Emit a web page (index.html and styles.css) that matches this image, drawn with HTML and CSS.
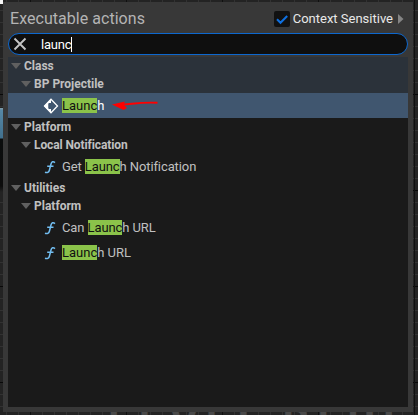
FILE: index.html
```html
<!DOCTYPE html>
<html lang="en">
<head>
<meta charset="utf-8">
<title>Executable actions</title>
<link rel="stylesheet" href="styles.css">
</head>
<body>
<svg width="0" height="0" class="defs">
  <symbol id="fn" viewBox="0 0 12 14"><path d="M11 2.6C9.200 1 7.6 1.600 7 4L5.400 10.2C4.800 12.400 3.200 13.1 1 12.2M3.2 6.200H9.500" fill="none" stroke="#72bdf0" stroke-width="1.5"/></symbol>
</svg>
<div class="node"></div>
<div class="corner"></div>
<div class="watermark">LEVEL BLUE</div>
<main class="panel">
  <header class="head">
    <span class="title">Executable actions</span>
    <span class="check"><svg width="16" height="16" viewBox="0 0 16 16"><path d="M3 8.2L6.5 11.7L13.2 5" fill="none" stroke="#0f70e0" stroke-width="2.1"/></svg></span>
    <span class="context">Context Sensitive</span>
    <svg class="more" width="6" height="10" viewBox="0 0 6 10"><path d="M0 0L5.5 5L0 10Z" fill="#858585"/></svg>
  </header>
  <div class="search">
    <svg width="14" height="14" viewBox="0 0 14 14"><path d="M1.5 1.5L12.5 12.5M12.5 1.5L1.5 12.5" stroke="#c4c4c4" stroke-width="1.9"/></svg>
    <span class="query">launc</span><i class="caret"></i>
  </div>
  <div class="list">
    <div class="row group lit"><i class="tri"></i><span>Class</span></div>
    <div class="row group sub lit"><i class="tri"></i><span>BP Projectile</span></div>
    <div class="row item selected">
      <svg class="event" width="16" height="16" viewBox="0 0 16 16"><path d="M8 1.200L14.500 8L8 14.800L1.500 8Z" fill="none" stroke="#fff" stroke-width="1.3"/><path d="M8 1L1 8L8 15V11H5.5V5H8Z" fill="#fff"/><path d="M5.5 6H8V3.200L12.400 8L8 12.800V10H5.500Z" fill="#40566f"/></svg>
      <span><mark>Launc</mark>h</span>
      <svg class="arrow" width="48" height="14" viewBox="0 0 48 14"><path d="M12 5.500C22 5 29 3 46.500 3.800" stroke="#f00" stroke-width="1.9" fill="none"/><path d="M1 5.500L14 2.500L12.500 5.500L16 9L12.500 11Z" fill="#f00"/></svg>
    </div>
    <div class="row group"><i class="tri"></i><span>Platform</span></div>
    <div class="row group sub"><i class="tri"></i><span class="tight">Local Notification</span></div>
    <div class="row item"><svg class="fn" width="12" height="14"><use href="#fn"/></svg><span class="tight">Get <mark>Launc</mark>h Notification</span></div>
    <div class="row group"><i class="tri"></i><span>Utilities</span></div>
    <div class="row group sub"><i class="tri"></i><span>Platform</span></div>
    <div class="row item"><svg class="fn" width="12" height="14"><use href="#fn"/></svg><span class="tight">Can <mark>Launc</mark>h URL</span></div>
    <div class="row item"><svg class="fn" width="12" height="14"><use href="#fn"/></svg><span><mark>Launc</mark>h URL</span></div>
  </div>
</main>
</body>
</html>
```
FILE: styles.css
```css
* { box-sizing: border-box; }
html { overflow: hidden; }
body {
  margin: 0; padding: 2px 5px 3px 3px; width: 418px; height: 415px; overflow: hidden; position: relative;
  font-family: Roboto, "Liberation Sans", sans-serif; font-size: 13px; color: #c0c0c0;
  background:
    repeating-linear-gradient(90deg, transparent 0 30px, #101010 30px 31px, transparent 31px 96px),
    repeating-linear-gradient(transparent 0 94px, #080808 94px 95px, transparent 95px 96px),
    repeating-linear-gradient(90deg, transparent 0 6px, #323232 6px 7px, transparent 7px 12px),
    repeating-linear-gradient(transparent 0 10px, #323232 10px 11px, transparent 11px 12px),
    #232323;
}
.defs { position: absolute; }
.corner { position: absolute; left: 0; top: 0; width: 3px; height: 4px; background: #f4f4f4; }
.node { position: absolute; left: 0; top: 108px; width: 3px; height: 84px; background: linear-gradient(#7d9aa8 0 1px, #5688a6 2px, #41718f 30px, #0b0d0d 31px, #0c0c0c 78px, #232323); }
.watermark { position: absolute; left: 108px; top: 402px; height: 13px; font-size: 42px; line-height: 42px; font-weight: 700; letter-spacing: 8px; word-spacing: -4px; color: #494949; white-space: nowrap; overflow: hidden; }
.panel { position: relative; width: 410px; height: 410px; background: #383838; padding: 0 5px 5px; display: flex; flex-direction: column; }
.head { height: 31px; display: flex; align-items: center; padding: 2px 4px 0 2px; }
.title { font-size: 16px; flex: 1; color: #b4b4b4; letter-spacing: 0.04px; }
.check { width: 16px; height: 16px; background: #111; border-radius: 2px; margin-right: 3px; }
.check svg { display: block; }
.context { color: #e8e8e8; }
.more { margin-left: 5px; }
.search { height: 22px; border: 1px solid #0d68cf; border-radius: 11px; background: #0f0f0f; display: flex; align-items: center; padding-left: 4px; margin-bottom: 2px; color: #fff; }
.query { margin-left: 14px; letter-spacing: -0.2px; }
.caret { width: 1px; height: 15px; background: #fff; }
.list { flex: 1; background: #1a1a1a; }
.row { display: flex; align-items: center; height: 18px; white-space: pre; }
.group { font-weight: 700; padding-left: 3px; font-size: 12px; }
.sub { padding-left: 13px; }
.lit { background: #2b323a; }
.tri { border: 5px solid transparent; border-top: 6px solid #606060; border-bottom: 0; margin-right: 3px; }
.item { height: 25px; padding-left: 36px; }
.selected { background: #40566f; color: #fff; padding-left: 35px; }
.event { margin-right: 3px; }
.fn { margin: 1px 6px 0 0; }
.tight { letter-spacing: -0.1px; }
mark { background: #8bc34a; color: #111; display: inline-block; height: 15px; line-height: 15px; }
.arrow { margin-left: 7px; }
```
